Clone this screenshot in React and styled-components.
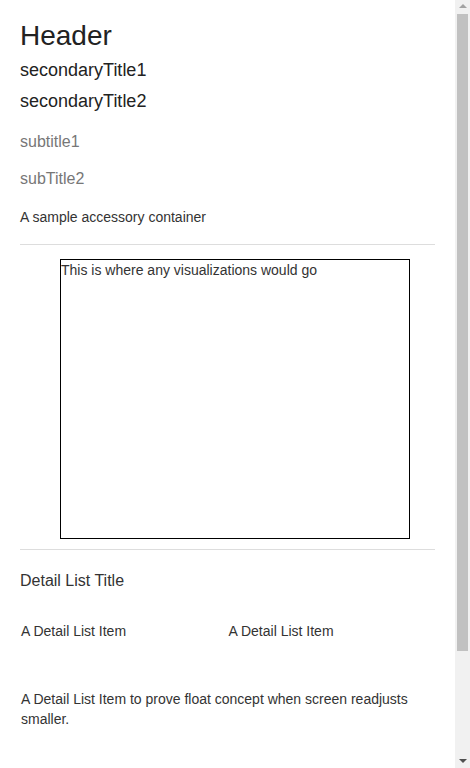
import React from "react";
import styled, { createGlobalStyle } from "styled-components";

const Global = createGlobalStyle`
  html, body { margin: 0; padding: 0; background: #fff; }
  body { font-family: "Liberation Sans", Arial, sans-serif; color: #333; }
`;

const Page = styled.div`
  padding: 20px 35px 160px 20px;
`;

const Rail = styled.div`
  position: fixed;
  top: 0;
  right: 0;
  width: 15px;
  height: 100vh;
  background: #f1f1f1;
  display: flex;
  flex-direction: column;
  align-items: center;
`;

const Arrow = styled.div`
  width: 0;
  height: 0;
  margin: ${(p) => (p.$down ? "auto 0 5px" : "4px 0 0")};
  border-left: 4px solid transparent;
  border-right: 4px solid transparent;
  ${(p) =>
    p.$down
      ? "border-top: 4px solid #505050;"
      : "border-bottom: 4px solid #a3a3a3;"}
`;

const Thumb = styled.div`
  margin-top: 6px;
  width: 11px;
  height: 637px;
  background: #c1c1c1;
`;

const Header = styled.h1`
  margin: 0;
  font-size: 28px;
  line-height: 32px;
  font-weight: 400;
  color: #222;
`;

const Secondary = styled.h2`
  margin: ${(p) => p.$mt}px 0 0;
  font-size: 18px;
  line-height: 22px;
  font-weight: 400;
  color: #222;
`;

const Subtitle = styled.h3`
  margin: ${(p) => p.$mt}px 0 0;
  font-size: 16px;
  line-height: 20px;
  font-weight: 400;
  color: #777;
`;

const Accessory = styled.div`
  margin-top: 19px;
  font-size: 14px;
  line-height: 18px;
  color: #333;
`;

const Rule = styled.hr`
  margin: ${(p) => p.$mt}px 0 0;
  border: 0;
  border-top: 1px solid #ddd;
  height: 0;
`;

const Viz = styled.div`
  box-sizing: border-box;
  margin: 14px 0 0 40px;
  width: 350px;
  height: 280px;
  border: 1px solid #000;
  font-size: 14px;
  line-height: 20px;
  color: #333;
`;

const DetailTitle = styled.h4`
  margin: 21px 0 0;
  font-size: 16px;
  line-height: 20px;
  font-weight: 400;
  color: #333;
`;

const DetailList = styled.div`
  display: flex;
  flex-wrap: wrap;
  margin-top: 30px;
  row-gap: 48px;
`;

const DetailItem = styled.div`
  box-sizing: border-box;
  width: ${(p) => (p.$full ? "100%" : "50%")};
  padding: 0 1px;
  font-size: 14px;
  line-height: 20px;
  color: #333;
`;

export default function App() {
  return (
    <>
      <Global />
      <Page>
        <Header>Header</Header>
        <Secondary $mt={7}>secondaryTitle1</Secondary>
        <Secondary $mt={9}>secondaryTitle2</Secondary>
        <Subtitle $mt={20}>subtitle1</Subtitle>
        <Subtitle $mt={17}>subTitle2</Subtitle>
        <Accessory>A sample accessory container</Accessory>
        <Rule $mt={18} />
        <Viz>This is where any visualizations would go</Viz>
        <Rule $mt={10} />
        <DetailTitle>Detail List Title</DetailTitle>
        <DetailList>
          <DetailItem>A Detail List Item</DetailItem>
          <DetailItem>A Detail List Item</DetailItem>
          <DetailItem $full>
            A Detail List Item to prove float concept when screen readjusts smaller.
          </DetailItem>
        </DetailList>
      </Page>
      <Rail aria-hidden="true">
        <Arrow />
        <Thumb />
        <Arrow $down />
      </Rail>
    </>
  );
}
